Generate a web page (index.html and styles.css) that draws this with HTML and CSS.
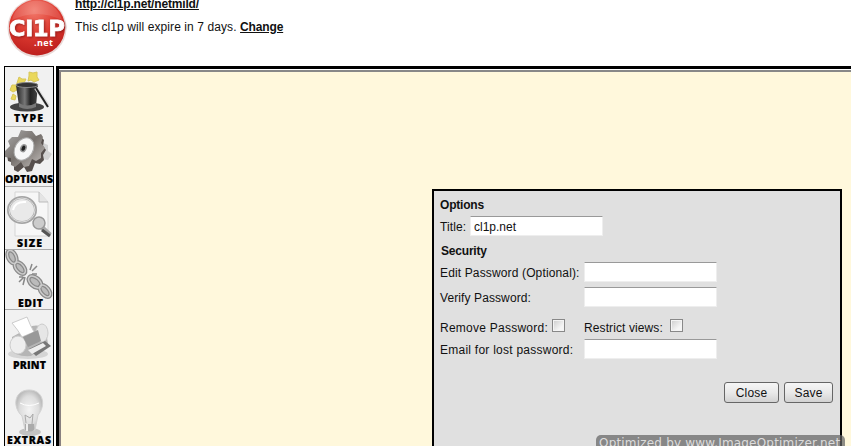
FILE: index.html
```html
<!DOCTYPE html>
<html lang="en">
<head>
<meta charset="utf-8">
<title>cl1p.net</title>
<link rel="stylesheet" href="styles.css">
</head>
<body>
<header class="header">
  <svg class="logo" width="62" height="60" viewBox="0 0 62 60">
    <defs>
      <radialGradient id="ball" cx=".45" cy=".2" r=".85"><stop offset="0" stop-color="#f2796b"/><stop offset=".5" stop-color="#dd3a30"/><stop offset="1" stop-color="#b91c1b"/></radialGradient>
    </defs>
    <circle cx="31" cy="28" r="29.5" fill="#e9d9d7"/>
    <circle cx="31" cy="27.500" r="28" fill="url(#ball)"/>
    <path d="M6 20C12-5 49-6 56 20Q31 8 6 20" fill="#fff" opacity=".12"/>
    <text class="logo-name" x="3" y="36" textLength="56" lengthAdjust="spacingAndGlyphs">Cl1P</text>
    <text class="logo-net" x="28" y="46" textLength="19">.net</text>
  </svg>
  <div class="heading">
    <a class="link url">http://cl1p.net/netmild/</a>
    <p class="expiry"><span class="expiry-text">This cl1p will expire in 7 days.</span> <a class="link change">Change</a></p>
  </div>
</header>
<main class="workspace">
  <nav class="tools">
    <a class="tool type"><svg width="48" height="59" viewBox="0 0 48 59">
      <defs><linearGradient id="hat"><stop stop-color="#222"/><stop offset=".4" stop-color="#777"/><stop offset=".65" stop-color="#222"/><stop offset="1" stop-color="#444"/></linearGradient></defs>
      <g fill="#ead85c" stroke="#d8c65a"><path d="M24 5l4 1 4-1 0 5 2 3-5 2-3-2-3 1 1-5zM14 10l3 2 4 0-2 4 1 4-5-1-4 1 1-4zM7 18l4 0 3 2-2 3-4 2-3-2zM8 27l3 2-1 4-4-1z"/></g>
      <ellipse cx="22" cy="40" rx="17" ry="4.500" fill="#444"/>
      <path d="M11 18Q22 13 33 18L31 39Q22 44 14 39Z" fill="url(#hat)"/>
      <ellipse cx="22" cy="18" rx="11" ry="2.500" fill="#333" stroke="#888"/>
      <path d="M14 36Q22 41 31 36V40Q22 44 14 40Z" fill="#777"/>
      <path d="M31 21L43 39" stroke="#ddd" stroke-width="4"/><path d="M31 21L43 40" stroke="#222" stroke-width="2"/>
      <text x="9" y="55" textLength="29">TYPE</text></svg></a>
    <a class="tool options"><svg width="48" height="59" viewBox="0 0 48 59">
      <defs><linearGradient id="gear" x2="1" y2="1"><stop stop-color="#aaa"/><stop offset=".5" stop-color="#77716d"/><stop offset="1" stop-color="#c8c4c1"/></linearGradient></defs>
      <path d="M36 15l7 3 0 6 4 3-4 6-7-1-7 5z" fill="#d2d2d2"/>
      <path d="M27 5l4 5 5-1 2 2-1 6 3 4-3 5 1 5-4 4-5-1-3 8-5 1-3-5-6 5-4-2 0-7-6-2-1-6 5-5-2-4 4-5 6-1 3-6 5 1z" fill="#57504d" transform="translate(1 2)"/>
      <path d="M27 4l4 5 5-2 2 3-2 6 4 5-4 5 0 5-5 3-4-2-3 7-5 1-3-5-6 5-4-2 0-7-6-1 0-6 5-5-2-5 4-4 6 0 3-7 5 1z" fill="url(#gear)"/>
      <ellipse cx="19" cy="22" rx="9" ry="12" transform="rotate(32 19 22)" fill="#f7f7f7" stroke="#aaa"/>
      <ellipse cx="18.500" cy="21" rx="2.500" ry="3.500" transform="rotate(25 18 21)" fill="#222" stroke="#999" stroke-width="1.500"/>
      <text x="0" y="56" textLength="48">OPTIONS</text></svg></a>
    <a class="tool size"><svg width="48" height="62" viewBox="0 0 48 62">
      <path d="M10 5H34L43 15V49H10Z" fill="#f7f7f7" stroke="#d5d5d5"/><path d="M34 5V15H43" fill="#e4e4e4" stroke="#bbb"/>
      <path d="M29 33L45 48" stroke="#aaa" stroke-width="5"/><path d="M37 43L45 49" stroke="#555" stroke-width="3"/>
      <circle cx="34" cy="36" r="6" fill="#ccc" stroke="#999" stroke-width="1.500"/>
      <ellipse cx="17" cy="23" rx="13.500" ry="12.500" fill="#e9e9e9" stroke="#a5a5a5" stroke-width="3"/><ellipse cx="17" cy="23" rx="13" ry="12" fill="none" stroke="#ddd"/>
      <path d="M8 23Q10 14 21 15" fill="none" stroke="#fff" stroke-width="2"/>
      <text x="12" y="60" textLength="25">SIZE</text></svg></a>
    <a class="tool edit"><svg width="48" height="59" viewBox="0 0 48 59">
      <g fill="#bbb" stroke="#8a8a8a" stroke-width="4"><ellipse cx="7" cy="7" rx="4" ry="7" transform="rotate(-25 7 7)"/><ellipse cx="15" cy="18" rx="4" ry="7" transform="rotate(-40 15 18)"/><ellipse cx="30" cy="32" rx="4.500" ry="7.500" transform="rotate(-50 30 32)"/><ellipse cx="40" cy="41" rx="4" ry="7" transform="rotate(-40 40 41)"/></g>
      <g fill="none" stroke="#ccc" stroke-width="1.500"><ellipse cx="7" cy="7" rx="4" ry="7" transform="rotate(-25 7 7)"/><ellipse cx="15" cy="18" rx="4" ry="7" transform="rotate(-40 15 18)"/><ellipse cx="30" cy="32" rx="4.500" ry="7.500" transform="rotate(-50 30 32)"/><ellipse cx="40" cy="41" rx="4" ry="7" transform="rotate(-40 40 41)"/></g>
      <path d="M25 20L27 14M27 21L32 16M27 24H32M20 27L18 35M19 27L14 32M18 27H14" stroke="#888" stroke-width="1.500"/>
      <text x="13" y="57" textLength="25">EDIT</text></svg></a>
    <a class="tool print"><svg width="48" height="62" viewBox="0 0 48 62">
      <ellipse cx="23" cy="44" rx="20" ry="5" fill="#d5d5d5"/>
      <path d="M7 27L27 16Q37 14 41 21L43 34 26 46Q10 47 7 40Z" fill="#b5b5b5"/>
      <ellipse cx="13" cy="35" rx="8" ry="9" fill="#eee" stroke="#ccc"/><ellipse cx="37" cy="23" rx="6" ry="9" fill="#e6e6e6" stroke="#ccc"/>
      <path d="M7 13L22 7Q25 15 29 22L17 27Q13 20 7 13" fill="#fff" stroke="#ccc"/>
      <path d="M18 27L33 20 36 31 23 37Z" fill="#999"/>
      <path d="M24 39L40 31 46 36 31 46Z" fill="#777"/><path d="M23 40L38 33 41 36 27 44Z" fill="#eee"/>
      <text x="8" y="59" textLength="33">PRINT</text></svg></a>
    <a class="tool extras"><svg width="48" height="75" viewBox="0 0 48 75">
      <defs><radialGradient id="bulb"><stop stop-color="#f4f4f4"/><stop offset=".7" stop-color="#ddd"/><stop offset="1" stop-color="#bdbdbd"/></radialGradient></defs>
      <ellipse cx="25" cy="60" rx="11" ry="4" fill="#c2c2c2"/>
      <path d="M24 18C39 18 41 34 33 43L30 58H20L17 44C7 35 9 18 24 18Z" fill="url(#bulb)" stroke="#d2d2d2"/>
      <path d="M21 51L20 43L25 46L28 42L27 52" fill="none" stroke="#aaa"/>
      <path d="M20 52H29V58Q25 61 20 58Z" fill="#aaa"/><path d="M22 52V59" stroke="#eee" stroke-width="2"/>
      <path d="M15 31Q24 36 34 31" fill="none" stroke="#fff"/>
      <text x="2" y="72" textLength="44">EXTRAS</text></svg></a>
  </nav>
  <section class="canvas">
    <div class="paper"></div>
  </section>
</main>
<form class="dialog">
  <h2 class="options-heading">Options</h2>
  <div class="title-row"><label for="title" class="label-title">Title:</label><input id="title" value="cl1p.net"></div>
  <h2 class="security-heading">Security</h2>
  <div class="row edit-row"><label for="pw" class="label-edit">Edit Password (Optional):</label><input id="pw" type="password"></div>
  <div class="row verify-row"><label for="verify">Verify Password:</label><input id="verify" type="password"></div>
  <div class="row checks"><span class="check"><label for="remove">Remove Password:</label><input id="remove" type="checkbox"></span><span class="check restrict"><label for="restrict">Restrict views:</label><input id="restrict" type="checkbox"></span></div>
  <div class="row email-row"><label for="email">Email for lost password:</label><input id="email"></div>
  <div class="actions"><button type="button" class="close">Close</button><button type="button" class="save">Save</button></div>
</form>
<div class="watermark">Optimized by www.ImageOptimizer.net</div>
</body>
</html>
```
FILE: styles.css
```css
* { box-sizing: border-box; }
body {
  margin: 0;
  height: 446px;
  overflow: hidden;
  position: relative;
  background: #fff;
  color: #111;
  font: 12px/16px "Liberation Sans", Arial, sans-serif;
}
.header { height: 66px; display: flex; padding-left: 6px; }
.logo { flex: none; }
.logo-name {
  font: bold 22px "DejaVu Sans", sans-serif;
  fill: #fff;
  stroke: #fff;
  stroke-width: .8px;
  filter: drop-shadow(1px 1px 1px rgba(110, 10, 10, .6));
}
.logo-net { font: bold 9px "Open Sans", sans-serif; fill: #fff; }
.heading { margin: -4px 0 0 7px; }
.link { font-weight: bold; text-decoration: underline; }
.url { display: block; height: 23px; letter-spacing: -.17px; }
.expiry { margin: 0; letter-spacing: .09px; }
.change { letter-spacing: -.15px; }
.workspace { display: flex; height: 380px; }
.tools {
  width: 50px;
  margin-left: 4px;
  border: 1px solid #000;
  border-bottom: 0;
  background: #f1f1f1;
  flex: none;
}
.tool { display: block; border-bottom: 1px solid #aaa; }
.tool svg { display: block; }
.tool text { font: 800 10.5px "Open Sans", sans-serif; fill: #000; stroke: #000; stroke-width: .2px; }
.type, .options, .edit { height: 60px; }
.size { height: 63px; }
.extras, .print { border: 0; }
.canvas {
  flex: 1;
  margin-left: 2px;
  border: 3px solid #000;
  border-right: 0;
  border-bottom: 0;
  padding-top: 1px;
}
.paper {
  height: 100%;
  background: #fff8dc;
  border-top: 2px solid #888;
  border-left: 2px solid #888080;
}
.dialog {
  position: absolute;
  left: 432px;
  top: 189px;
  width: 410px;
  height: 270px;
  border: 2px solid #000;
  background: #e0e0e0;
  padding: 6px 7px 0 6px;
}
.dialog h2 { margin: 0; font-size: 12px; line-height: 16px; letter-spacing: -.2px; }
.title-row { display: flex; height: 20px; margin-top: 3px; line-height: 22px; }
.label-title { width: 30px; letter-spacing: .1px; }
.dialog .security-heading { margin: 7px 0 0 1px; }
.row {
  display: grid;
  grid-template-columns: 144px 134px;
  height: 20px;
  line-height: 22px;
  letter-spacing: .25px;
  white-space: nowrap;
}
.edit-row { margin-top: 3px; }
.label-edit { letter-spacing: .14px; }
.verify-row { margin-top: 5px; letter-spacing: .1px; }
.checks { margin-top: 10px; }
.email-row { margin-top: 2px; }
.check { display: flex; }
.check label { width: 112px; }
.restrict label { width: 86px; letter-spacing: .1px; }
input {
  width: 133px;
  height: 20px;
  margin: 0;
  border: 1px solid #eee;
  border-top-color: #999;
  background: #fff;
  padding: 2px 3px 0;
  color: #111;
  font: inherit;
}
input[type="checkbox"] {
  appearance: none;
  width: 13px;
  height: 13px;
  margin-top: 2px;
  padding: 0;
  border: 1px solid #888;
  background: linear-gradient(135deg, #ccc, #f5f5f5 70%);
  box-shadow: inset 0 0 0 1px #f4f4f4;
}
.actions { display: flex; justify-content: flex-end; gap: 5px; margin-top: 23px; }
button {
  height: 21px;
  padding: 0;
  border: 1px solid #666;
  border-radius: 3px;
  background: linear-gradient(#f6f6f6, #e9e9e9 50%, #d2d2d2);
  color: #111;
  font: inherit;
  letter-spacing: .2px;
}
.close { width: 55px; }
.save { width: 49px; }
.watermark {
  position: absolute;
  left: 596px;
  top: 435px;
  width: 249px;
  height: 22px;
  padding-left: 3px;
  border-radius: 5px;
  background: rgba(100, 100, 100, .72);
  color: #ddd;
  font: 12px/17px "DejaVu Sans", sans-serif;
  letter-spacing: .19px;
  white-space: nowrap;
}
```
